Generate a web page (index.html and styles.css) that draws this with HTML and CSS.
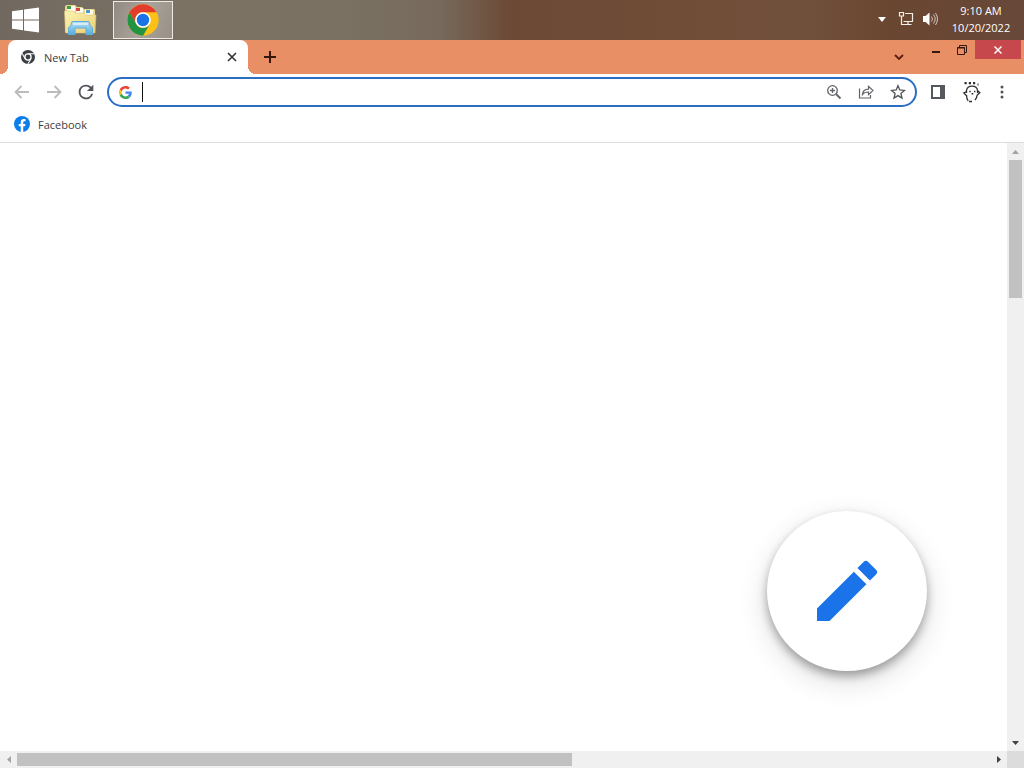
FILE: index.html
```html
<!DOCTYPE html>
<html lang="en">
<head>
<meta charset="utf-8">
<title>New Tab</title>
<link rel="stylesheet" href="styles.css">
</head>
<body>
<div class="desktop">
  <header class="taskbar">
    <button class="task start" aria-label="Start">
      <svg width="28" height="26" viewBox="0 0 28 26" fill="#fff"><path d="M1 4.2 12 2.7V12.500H1zM13 2.500 28 .4V12.500H13zM1 13.500H12V23.300L1 21.800zM13 13.500H28V25.600L13 23.500z"/></svg>
    </button>
    <button class="task" aria-label="File Explorer">
      <svg width="34" height="32" viewBox="0 0 34 32">
        <defs>
          <linearGradient id="folder" x1="0" y1="0" x2="1" y2="1"><stop offset="0" stop-color="#fdf4b4"/><stop offset="1" stop-color="#e9cf72"/></linearGradient>
          <linearGradient id="stand" x1="0" y1="0" x2="0" y2="1"><stop offset="0" stop-color="#b4def2"/><stop offset="1" stop-color="#55aee0"/></linearGradient>
        </defs>
        <path d="M2 28V3q0-2 2-2h8l2 2h5l2 2h10q1 0 1 2v20z" fill="#ead98b"/>
        <path d="M4 2h8v5H4zM13 4h7v5h-7zM22 6h8v5h-8z" fill="#fffdf0"/>
        <path d="M4 2h4v3H4z" fill="#36a04b"/><path d="M13 4h4v3h-4z" fill="#d8453a"/><path d="M23 6h4v3h-4z" fill="#4b9ac5"/>
        <path d="M1.500 7h9l2 2h8l2 2H33l-1 18H2.500z" fill="url(#folder)" stroke="#d9c474" stroke-width=".6"/>
        <path d="M9 17.500h17l1.500 5 2 1v7h-6.500v-6.500h-11v6.500H5.500v-7l2-1z" fill="url(#stand)" stroke="#60addb"/>
        <path d="M10 20h15" stroke="#e6f6fc" stroke-width="1.500"/>
      </svg>
    </button>
    <button class="task active" aria-label="Google Chrome">
      <svg width="32" height="32" viewBox="0 0 48 48">
        <circle cx="24" cy="24" r="23.500" fill="#fbc116"/>
        <path d="M3.650 12.250A23.500 23.500 0 0 1 44.350 12.250H24A11.750 11.750 0 0 0 13.820 29.880z" fill="#e33b2e"/>
        <path d="M3.650 12.250A23.500 23.500 0 0 0 24 47.500L34.180 29.880A11.750 11.750 0 0 1 13.820 29.880z" fill="#229342"/>
        <circle cx="24" cy="24" r="11.750" fill="#fff"/><circle cx="24" cy="24" r="9.300" fill="#1a73e8"/>
      </svg>
    </button>
    <div class="tray">
      <button class="tray-button" aria-label="Show hidden icons"><svg width="8" height="5" viewBox="0 0 8 5"><path d="M0 0h8L4 5z" fill="#fff"/></svg></button>
      <button class="tray-button" aria-label="Network"><svg width="16" height="16" viewBox="0 0 16 16" fill="none" stroke="#f5eee8" stroke-width="1.200"><path d="M7 2.500h7.500v8H5.500M10 10.500v3M6.500 13.500h7M1.500 1.500h4v3.500h-4zM3.500 5v9M3.500 13.500h3"/></svg></button>
      <button class="tray-button" aria-label="Volume"><svg width="16" height="16" viewBox="0 0 16 16"><path d="M1 5h2.500L7.500 1.500v13L3.500 11H1z" fill="#fff"/><path d="M9.500 5.500q2 2.500 0 5M11.500 3.500q3.400 4.500 0 9M13.500 2q4 6 0 12" fill="none" stroke="#e0d3ca" stroke-width=".9"/></svg></button>
      <button class="clock"><span>9:10 AM</span><span>10/20/2022</span></button>
    </div>
  </header>

  <div class="tabstrip">
    <div class="tab">
      <svg width="14" height="14" viewBox="0 0 48 48">
        <circle cx="24" cy="24" r="24" fill="#3c4043"/>
        <circle cx="24" cy="24" r="10.500" fill="#3c4043" stroke="#fff" stroke-width="4.500"/>
        <path d="M24 12.500h22M14 29.800 3.500 11.500M34 29.800 23.500 48" stroke="#fff" stroke-width="3.500"/>
      </svg>
      <span class="tab-title">New Tab</span>
      <button class="tab-close" aria-label="Close tab"><svg width="10" height="10" viewBox="0 0 10 10"><path d="m1 1 8 8M9 1 1 9" stroke="#303134" stroke-width="1.600"/></svg></button>
    </div>
    <button class="new-tab" aria-label="New tab"><svg width="12" height="12" viewBox="0 0 12 12"><path d="M6 0v12M0 6h12" stroke="#35170d" stroke-width="2"/></svg></button>
    <button class="tab-search" aria-label="Search tabs"><svg width="10" height="6" viewBox="0 0 10 6"><path d="m1 1 4 4 4-4" fill="none" stroke="#5c1d10" stroke-width="1.800"/></svg></button>
    <div class="window-controls">
      <button class="window-button" aria-label="Minimize"><svg width="10" height="10" viewBox="0 0 10 10"><path d="M1 7h8" stroke="#35170d" stroke-width="2"/></svg></button>
      <button class="window-button" aria-label="Restore"><svg width="10" height="10" viewBox="0 0 10 10"><path d="M.5 2.500h7v7h-7zM2.500 2V.5h7v7H8" fill="none" stroke="#35170d"/><path d="M0 3h8" stroke="#35170d"/></svg></button>
      <button class="window-button close" aria-label="Close"><svg width="8" height="8" viewBox="0 0 8 8"><path d="m.5.5 7 7M7.500.5l-7 7" stroke="#fff" stroke-width="1.500"/></svg></button>
    </div>
  </div>

  <nav class="toolbar" aria-label="Browser toolbar">
    <button class="tool" aria-label="Back"><svg width="16" height="14" viewBox="0 0 16 14"><path d="M15 7H2M7.500 1 1.500 7l6 6" fill="none" stroke="#babcbe" stroke-width="1.800"/></svg></button>
    <button class="tool" aria-label="Forward"><svg width="16" height="14" viewBox="0 0 16 14"><path d="M1 7h13M8.500 1l6 6-6 6" fill="none" stroke="#babcbe" stroke-width="1.800"/></svg></button>
    <button class="tool" aria-label="Reload"><svg width="22" height="22" viewBox="0 0 24 24" fill="#505357"><path d="M17.650 6.350A7.960 7.960 0 0 0 12 4a8 8 0 1 0 7.730 10h-2.080A6 6 0 1 1 12 6c1.660 0 3.140.69 4.220 1.780L13 11h7V4z"/></svg></button>
    <div class="omnibox">
      <svg width="13" height="13" viewBox="0 0 48 48">
        <path fill="#ea4335" d="M24 9.500c3.540 0 6.710 1.220 9.210 3.600l6.850-6.850C35.900 2.380 30.470 0 24 0 14.620 0 6.510 5.380 2.560 13.220l7.980 6.190C12.430 13.720 17.740 9.500 24 9.500z"/>
        <path fill="#4285f4" d="M46.980 24.550c0-1.570-.15-3.090-.38-4.550H24v9.020h12.940c-.58 2.960-2.260 5.480-4.780 7.180l7.730 6c4.510-4.180 7.090-10.360 7.090-17.650z"/>
        <path fill="#fbbc05" d="M10.530 28.590A14.500 14.500 0 0 1 10.530 19.410l-7.970-6.190a24 24 0 0 0 0 21.560z"/>
        <path fill="#34a853" d="M24 48c6.480 0 11.930-2.130 15.890-5.810l-7.730-6c-2.150 1.450-4.920 2.300-8.160 2.300-6.260 0-11.570-4.220-13.470-9.910l-7.980 6.190C6.510 42.620 14.620 48 24 48z"/>
      </svg>
      <span class="caret"></span>
      <input class="address" type="text" aria-label="Address and search bar">
      <button class="tool" aria-label="Zoom"><svg width="16" height="16" viewBox="0 0 16 16" fill="none" stroke="#606367" stroke-width="1.300"><circle cx="6.500" cy="6.500" r="4.800"/><path d="m10 10 4.500 4.500" stroke-width="1.800"/><path d="M4 6.500h5M6.500 4v5"/></svg></button>
      <button class="tool" aria-label="Share"><svg width="16" height="16" viewBox="0 0 16 16" fill="none" stroke="#606367" stroke-width="1.200"><path d="M1.500 4.500v9.500h11v-3M4.500 10.500c.3-3.400 2.300-5.200 6-5.300V2.300l4.500 4.200-4.500 4.200V8C7.500 8 5.800 8.700 4.500 10.500z"/></svg></button>
      <button class="tool" aria-label="Bookmark this tab"><svg width="16" height="16" viewBox="0 0 16 16" fill="none" stroke="#505357" stroke-width="1.300"><path d="m8 1.700 1.800 4.300 4.700.4-3.600 3.100 1.100 4.600L8 11.600l-4 2.500 1.100-4.600L1.500 6.400 6.200 6z"/></svg></button>
    </div>
    <button class="tool side" aria-label="Side panel"><svg width="14" height="14" viewBox="0 0 14 14"><path d="M1 1h12v12H1z" fill="#fff" stroke="#55585c" stroke-width="2"/><path d="M9 0h5v14H9z" fill="#55585c"/></svg></button>
    <button class="tool" aria-label="Profile"><svg width="20" height="22" viewBox="0 0 20 22" fill="none" stroke="#303134" stroke-width="1.300"><path d="M4.500 12V9.500C5 6.500 7.200 5.200 10 5.200s5.200 1.500 5.500 4.300v2.500M4.500 10.500 1.800 12l2.500 2.500M15.500 9.500l2.300 2.200-3 2.800M4.500 14c0 2.500.5 4.300 1.700 5.800M15 14.500c0 2-.7 3-2 4.500M7 20.500h3"/><path d="M2.500 2.200h2.200M6.800 2.200H9M11 2.200h2.200M15.500 3.500h1" stroke-width="2.200"/><path d="M7.300 10.500h1.400M12 10.500h1.400M9.500 12.800h1.800" stroke-width="1.600"/></svg></button>
    <button class="tool menu" aria-label="Menu"><svg width="4" height="14" viewBox="0 0 4 14" fill="#505357"><circle cx="2" cy="2" r="1.500"/><circle cx="2" cy="7" r="1.500"/><circle cx="2" cy="12" r="1.500"/></svg></button>
  </nav>

  <nav class="bookmarks" aria-label="Bookmarks">
    <a class="bookmark" href="#">
      <svg width="16" height="16" viewBox="0 0 24 24"><circle cx="12" cy="12" r="12" fill="#0c7eeb"/><path d="M16.670 15.470 17.200 12h-3.320V9.750c0-.95.460-1.880 1.950-1.880h1.510V4.920s-1.370-.24-2.680-.24c-2.740 0-4.530 1.670-4.530 4.670V12H7.080v3.470h3.050v8.390a12 12 0 0 0 3.750 0v-8.390z" fill="#fff"/></svg>
      <span>Facebook</span>
    </a>
  </nav>

  <div class="viewport">
    <main class="page">
      <button class="customize" aria-label="Customize Chrome"><svg width="80" height="80" viewBox="0 0 24 24" fill="#1a73e8"><path d="M3 17.250V21h3.750L17.810 9.940l-3.750-3.750zM20.710 7.040a1 1 0 0 0 0-1.410l-2.340-2.340a1 1 0 0 0-1.410 0l-1.830 1.830 3.750 3.750z"/></svg></button>
    </main>
    <div class="scrollbar vertical">
      <button class="arrow" aria-label="Scroll up"><svg width="7" height="4" viewBox="0 0 7 4"><path d="M0 4h7L3.500 0z" fill="#a3a3a3"/></svg></button>
      <div class="track"><div class="thumb"></div></div>
      <button class="arrow" aria-label="Scroll down"><svg width="7" height="4" viewBox="0 0 7 4"><path d="M0 0h7L3.500 4z" fill="#404040"/></svg></button>
    </div>
    <div class="scrollbar horizontal">
      <button class="arrow" aria-label="Scroll left"><svg width="4" height="7" viewBox="0 0 4 7"><path d="M4 0v7L0 3.500z" fill="#a3a3a3"/></svg></button>
      <div class="track"><div class="thumb"></div></div>
      <button class="arrow" aria-label="Scroll right"><svg width="4" height="7" viewBox="0 0 4 7"><path d="M0 0v7l4-3.500z" fill="#404040"/></svg></button>
    </div>
    <div class="corner"></div>
  </div>
</div>
</body>
</html>
```
FILE: styles.css
```css
* { box-sizing: border-box; }
body { margin: 0; font-family: "Open Sans", "Noto Sans", sans-serif; font-size: 11px; color: #3c4043; }
button { display: flex; align-items: center; justify-content: center; flex: none; margin: 0; padding: 0; border: 0; background: none; font: inherit; color: inherit; }
svg { display: block; flex: none; }
.desktop { display: flex; flex-direction: column; height: 100vh; background: #fff; overflow: hidden; }

.taskbar { display: flex; flex: none; height: 40px; background: linear-gradient(90deg, #716860 0%, #7b7264 18%, #7a7163 34%, #77695b 43%, #6b4935 50%, #704d37 65%, #71503b 79%, #694630 87%, #68483a 100%); }
.task { width: 60px; height: 38px; margin-top: 1px; }
.task.start { width: 50px; }
.task.active { margin-left: 3px; border: 1px solid #eeeae5; background: linear-gradient(110deg, #918a83, #aaa39a 50%, #989085); }
.tray { display: flex; align-items: center; margin-left: auto; padding: 0 12px 2px 0; color: #fff; }
.tray-button { width: 24px; height: 38px; }
.clock { flex-direction: column; width: 62px; margin-left: 8px; line-height: 17px; white-space: nowrap; }

.tabstrip { display: flex; flex: none; height: 34px; padding-left: 8px; background: #e98f65; }
.tab { position: relative; display: flex; align-items: center; width: 240px; padding: 0 8px 0 13px; border-radius: 8px 8px 0 0; background: #fff; }
.tab::before, .tab::after { content: ""; position: absolute; bottom: 0; width: 8px; height: 8px; }
.tab::before { right: 100%; background: radial-gradient(circle at 0 0, transparent 8px, #fff 8px); }
.tab::after { left: 100%; background: radial-gradient(circle at 100% 0, transparent 8px, #fff 8px); }
.tab-title { flex: 1; margin-left: 9px; }
.tab-close { width: 16px; height: 16px; }
.new-tab { width: 28px; margin-left: 8px; }
.tab-search { width: 28px; margin-left: auto; }
.window-controls { display: flex; height: 19px; margin-left: 10px; padding-right: 3px; }
.window-button { width: 26px; }
.window-button.close { width: 46px; background: #c6484c; }

.toolbar { display: flex; align-items: center; flex: none; height: 36px; padding: 0 8px 0 6px; }
.tool { width: 32px; height: 28px; }
.tool.menu { width: 28px; }
.tool.side { margin: 0 2px 0 5px; }
.omnibox { display: flex; align-items: center; flex: 1; height: 30px; margin-left: 5px; padding: 0 1px 0 10px; border: 2px solid #2a6fc4; border-radius: 15px; }
.caret { width: 1px; height: 20px; margin-left: 10px; background: #111; }
.address { flex: 1; min-width: 0; height: 24px; padding: 0; border: 0; outline: 0; background: none; font: inherit; }

.bookmarks { display: flex; align-items: center; flex: none; height: 33px; padding: 0 14px 4px; border-bottom: 1px solid #dadce0; }
.bookmark { display: flex; align-items: center; gap: 8px; color: inherit; text-decoration: none; }

.viewport { display: grid; flex: 1; min-height: 0; grid-template-columns: 1fr 17px; grid-template-rows: 1fr 17px; }
.page { display: flex; align-items: flex-end; justify-content: flex-end; min-width: 0; padding: 80px; overflow: hidden; }
.customize { width: 160px; height: 160px; border-radius: 50%; background: #fff; box-shadow: 0 5px 10px rgba(0, 0, 0, .32), 0 10px 30px rgba(0, 0, 0, .14); }
.scrollbar { display: flex; background: #f0f0f0; }
.vertical { flex-direction: column; }
.track { display: flex; flex: 1; }
.thumb { background: #c1c1c1; }
.vertical .thumb { width: 13px; height: 24%; margin: 0 2px; }
.horizontal .thumb { width: 57%; height: 13px; margin: 2px 0; }
.arrow { width: 17px; height: 17px; }
.corner { background: #dcdcdc; }
```
